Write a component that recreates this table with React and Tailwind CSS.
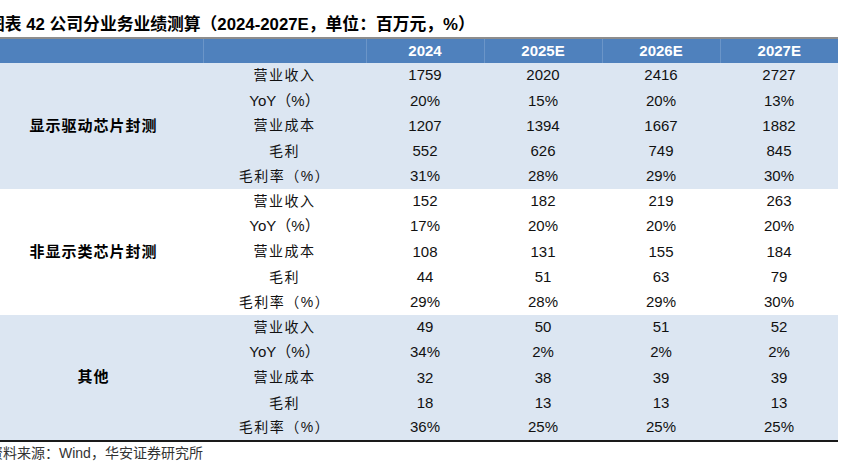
const groups = [
  {
    name: "显示驱动芯片封测",
    bg: "bg-[#dce6f2]",
    rows: [
      ["营业收入", "1759", "2020", "2416", "2727"],
      ["YoY（%）", "20%", "15%", "20%", "13%"],
      ["营业成本", "1207", "1394", "1667", "1882"],
      ["毛利", "552", "626", "749", "845"],
      ["毛利率（%）", "31%", "28%", "29%", "30%"],
    ],
  },
  {
    name: "非显示类芯片封测",
    bg: "bg-white",
    rows: [
      ["营业收入", "152", "182", "219", "263"],
      ["YoY（%）", "17%", "20%", "20%", "20%"],
      ["营业成本", "108", "131", "155", "184"],
      ["毛利", "44", "51", "63", "79"],
      ["毛利率（%）", "29%", "28%", "29%", "30%"],
    ],
  },
  {
    name: "其他",
    bg: "bg-[#dce6f2]",
    rows: [
      ["营业收入", "49", "50", "51", "52"],
      ["YoY（%）", "34%", "2%", "2%", "2%"],
      ["营业成本", "32", "38", "39", "39"],
      ["毛利", "18", "13", "13", "13"],
      ["毛利率（%）", "36%", "25%", "25%", "25%"],
    ],
  },
];

const years = ["2024", "2025E", "2026E", "2027E"];
const sans = "font-['Liberation_Sans','Noto_Sans_CJK_SC',sans-serif]";

export default function App() {
  return (
    <div className={`w-[856px] h-[476px] bg-white overflow-hidden text-black ${sans}`}>
      <div className="h-[37px] flex items-end pb-[3px] -ml-[12px] text-[16.8px] font-bold leading-none whitespace-nowrap">
        图表 42 公司分业务业绩测算（2024-2027E，单位：百万元，%）
      </div>
      <table className="w-[838px] border-collapse table-fixed border-t-2 border-t-[#8d8d8d] border-b-2 border-b-[#1a1a1a]">
        <colgroup>
          <col className="w-[203px]" />
          <col className="w-[163px]" />
          <col className="w-[118px]" />
          <col className="w-[118px]" />
          <col className="w-[118px]" />
          <col className="w-[118px]" />
        </colgroup>
        <thead>
          <tr className="h-[25px] bg-[#4f81bd] text-white text-[15px] font-bold">
            <th className="border-r border-[#6b95c8]" />
            <th className="border-r border-[#6b95c8]" />
            {years.map((y, i) => (
              <th key={y} className={i < 3 ? "border-r border-[#6b95c8] text-center" : "text-center"}>
                {y}
              </th>
            ))}
          </tr>
        </thead>
        <tbody>
          {groups.map((g) =>
            g.rows.map((r, ri) => (
              <tr key={g.name + ri} className={`h-[25.2px] ${g.bg}`}>
                {ri === 0 && (
                  <td rowSpan={5} className="text-center align-middle pr-[16px] text-[15px] font-bold tracking-[1px]">
                    {g.name}
                  </td>
                )}
                <td
                  className={`text-center text-[14px] text-[#111] ${
                    r[0].startsWith("YoY") ? "text-[15px]" : "tracking-[1.5px]"
                  }`}
                >
                  {r[0]}
                </td>
                {r.slice(1).map((v, vi) => (
                  <td key={vi} className="text-center text-[15px] text-[#111]">
                    {v}
                  </td>
                ))}
              </tr>
            ))
          )}
        </tbody>
      </table>
      <div className="-ml-[11px] pt-[4px] text-[14px] leading-none text-[#333] whitespace-nowrap">
        资料来源：Wind，华安证券研究所
      </div>
    </div>
  );
}
